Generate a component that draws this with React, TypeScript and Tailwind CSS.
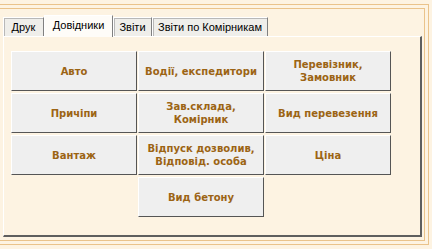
import React from 'react';

const tabs = [
  { name: 'Друк', w: 'w-[41px]' },
  { name: 'Довідники', w: 'w-[69px]' },
  { name: 'Звіти', w: 'w-[39px]' },
  { name: 'Звіти по Комірникам', w: 'w-[116px]' },
];

const buttons: { label: string[]; col?: string }[] = [
  { label: ['Авто'] },
  { label: ['Водії, експедитори'] },
  { label: ['Перевізник,', 'Замовник'] },
  { label: ['Причіпи'] },
  { label: ['Зав.склада,', 'Комірник'] },
  { label: ['Вид перевезення'] },
  { label: ['Вантаж'] },
  { label: ['Відпуск дозволив,', 'Відповід. особа'] },
  { label: ['Ціна'] },
  { label: ['Вид бетону'], col: 'col-start-2' },
];

function Tab({ name, w, active }: { name: string; w: string; active: boolean }) {
  if (active) {
    return (
      <div className={`relative z-10 -mb-px h-[22px] ${w} border-t border-l border-white border-r border-r-[#808080] bg-[#fefcf8] pt-[2px] text-center text-[11px] leading-[15px] text-black`}>
        {name}
      </div>
    );
  }
  return (
    <div className={`h-[19px] ${w} border-t border-l border-white border-r border-r-[#808080] bg-[#efeeea] pt-[2px] text-center text-[11px] leading-[14px] text-black shadow-[inset_1px_1px_0_#b8b8b8]`}>
      {name}
    </div>
  );
}

export default function App() {
  return (
    <div
      className="h-[249px] w-[432px] overflow-hidden bg-[#fdf3e2] pt-[4px]"
      style={{ fontFamily: '"Liberation Sans", Arial, sans-serif' }}
    >
      <div className="h-[241px] w-[429px] border-t border-r border-b border-[#eac38b] pt-[3px] pr-[3px] pb-[3px]">
        <div className="flex h-full flex-col border-t border-r border-b border-[#eac38b] pt-[6px] pr-[2px] pb-[3px] pl-[3px]">
          <div className="flex items-end">
            {tabs.map((t) => (
              <Tab key={t.name} name={t.name} w={t.w} active={t.name === 'Довідники'} />
            ))}
          </div>
          <div className="flex-1 border-t border-l border-white border-r-2 border-b-2 border-r-[#5e5e5e] border-b-[#5e5e5e] bg-[#fdf3e2] pt-[14px] pl-[7px]">
            <div className="grid grid-cols-[repeat(3,126px)] gap-x-[1px] gap-y-[2px]">
              {buttons.map((b, i) => (
                <div
                  key={i}
                  className={`flex h-[40px] flex-col items-center justify-center border-t border-l border-white border-r border-b border-r-[#555] border-b-[#555] bg-[#efefef] text-[10px] font-bold leading-[13px] text-[#9c6414] ${b.col ?? ''}`}
                  style={{ fontFamily: '"DejaVu Sans", Verdana, sans-serif' }}
                >
                  {b.label.map((l) => (
                    <span key={l}>{l}</span>
                  ))}
                </div>
              ))}
            </div>
          </div>
        </div>
      </div>
    </div>
  );
}
